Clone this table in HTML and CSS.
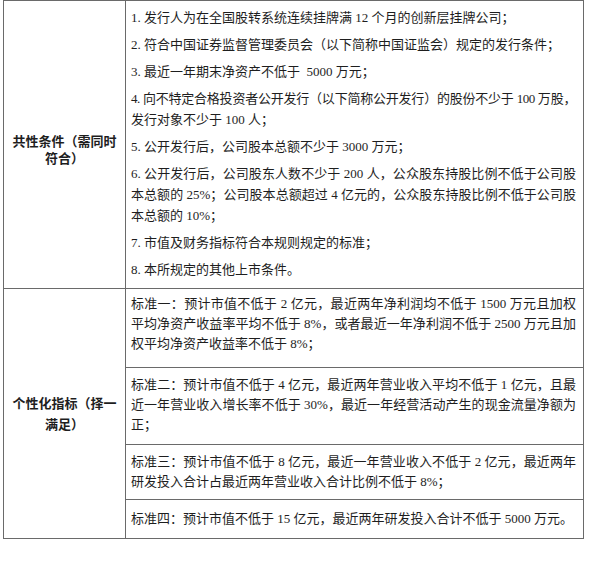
FILE: index.html
```html
<!DOCTYPE html>
<html lang="zh-CN">
<head>
<meta charset="utf-8">
<title>上市条件</title>
<link rel="stylesheet" href="styles.css">
</head>
<body>
<div class="sheet">
  <div class="cell label label-common">共性条件（需同时<br>符合）</div>
  <div class="cell content common">
    <p>1. 发行人为在全国股转系统连续挂牌满 12 个月的创新层挂牌公司；</p>
    <p>2. 符合中国证券监督管理委员会（以下简称中国证监会）规定的发行条件；</p>
    <p>3. 最近一年期末净资产不低于&nbsp; 5000 万元；</p>
    <p><span class="ln tight">4. 向不特定合格投资者公开发行（以下简称公开发行）的股份不少于 100 万股，</span><span class="last">发行对象不少于 100 人；</span></p>
    <p>5. 公开发行后，公司股本总额不少于 3000 万元；</p>
    <p><span class="ln">6. 公开发行后，公司股东人数不少于 200 人，公众股东持股比例不低于公司股</span><span class="ln">本总额的 25%；公司股本总额超过 4 亿元的，公众股东持股比例不低于公司股</span><span class="last">本总额的 10%；</span></p>
    <p>7. 市值及财务指标符合本规则规定的标准；</p>
    <p>8. 本所规定的其他上市条件。</p>
  </div>
  <div class="cell label label-custom">个性化指标（择一<br>满足）</div>
  <div class="cell content std std-1">
    <p><span class="ln">标准一：预计市值不低于 2 亿元，最近两年净利润均不低于 1500 万元且加权</span><span class="ln">平均净资产收益率平均不低于 8%，或者最近一年净利润不低于 2500 万元且加</span><span class="last">权平均净资产收益率不低于 8%；</span></p>
  </div>
  <div class="cell content std std-2">
    <p><span class="ln">标准二：预计市值不低于 4 亿元，最近两年营业收入平均不低于 1 亿元，且最</span><span class="ln">近一年营业收入增长率不低于 30%，最近一年经营活动产生的现金流量净额为</span><span class="last">正；</span></p>
  </div>
  <div class="cell content std std-3">
    <p><span class="ln">标准三：预计市值不低于 8 亿元，最近一年营业收入不低于 2 亿元，最近两年</span><span class="last">研发投入合计占最近两年营业收入合计比例不低于 8%；</span></p>
  </div>
  <div class="cell content std std-4">
    <p>标准四：预计市值不低于 15 亿元，最近两年研发投入合计不低于 5000 万元。</p>
  </div>
</div>
</body>
</html>
```
FILE: styles.css
```css
html, body {
  margin: 0;
  padding: 0;
  background: #ffffff;
}

body {
  padding: 0 0 0 3px;
  font-family: "Liberation Serif", "Noto Sans CJK SC", serif;
  font-size: 13px;
  color: #1e1e1e;
}

.sheet {
  display: grid;
  grid-template-columns: 122px 458px;
  grid-template-rows: 288px 79px 77px 55px 39px;
  width: 580px;
  border-top: 1px solid #6a6a6a;
  border-left: 1px solid #6a6a6a;
  box-sizing: content-box;
}

.cell {
  box-sizing: border-box;
  border-right: 1px solid #6a6a6a;
  border-bottom: 1px solid #6a6a6a;
}

.label {
  display: flex;
  align-items: center;
  justify-content: center;
  text-align: center;
  font-weight: 700;
  line-height: 18px;
  padding: 0 4px;
}

.label-common {
  grid-row: 1;
  grid-column: 1;
  padding-top: 11px;
  line-height: 17px;
}

.label-custom {
  grid-row: 2 / 6;
  grid-column: 1;
  line-height: 21px;
}

.content {
  grid-column: 2;
  padding: 0 7px 0 5px;
  line-height: 21px;
}

.content p {
  margin: 0;
}

.common {
  grid-row: 1;
  padding-top: 6px;
}

.common p + p {
  margin-top: 6px;
}

.ln {
  display: block;
  white-space: nowrap;
  text-align: justify;
  text-align-last: justify;
}

.tight {
  letter-spacing: -0.45px;
}

.last {
  display: block;
}

.std {
  display: flex;
  flex-direction: column;
  justify-content: center;
  line-height: 20px;
}

.std-1 { grid-row: 2; padding-bottom: 8px; }
.std-2 { grid-row: 3; padding-bottom: 3px; }
.std-3 { grid-row: 4; padding-bottom: 1px; }
.std-4 { grid-row: 5; }
```
